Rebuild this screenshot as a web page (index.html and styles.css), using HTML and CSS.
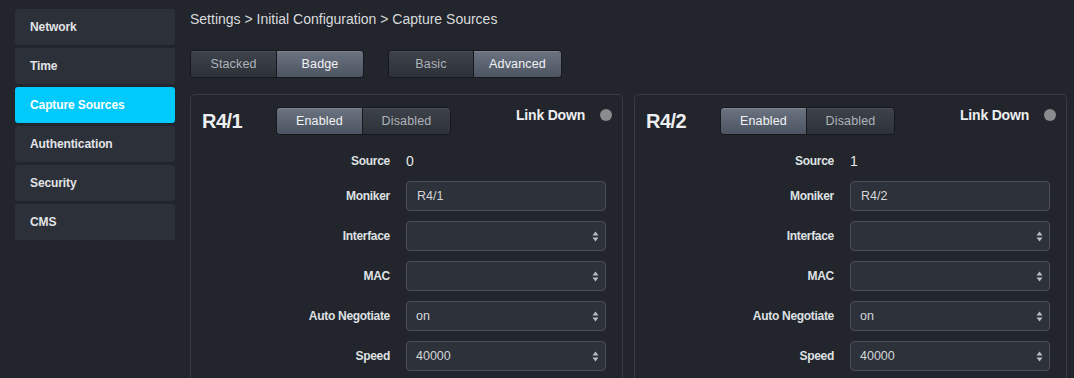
FILE: index.html
```html
<!DOCTYPE html>
<html>
<head>
<meta charset="utf-8">
<link rel="stylesheet" href="styles.css">
</head>
<body>
<div class="app">
  <nav class="sidebar">
    <div class="nav-item">Network</div>
    <div class="nav-item">Time</div>
    <div class="nav-item active">Capture Sources</div>
    <div class="nav-item">Authentication</div>
    <div class="nav-item">Security</div>
    <div class="nav-item">CMS</div>
  </nav>
  <main class="main">
    <div class="crumbs">Settings &gt; Initial Configuration &gt; Capture Sources</div>
    <div class="toolbar">
      <div class="seg">
        <div class="seg-btn w85">Stacked</div>
        <div class="seg-btn w86 on">Badge</div>
      </div>
      <div class="seg">
        <div class="seg-btn w84">Basic</div>
        <div class="seg-btn w87 on">Advanced</div>
      </div>
    </div>
    <div class="panels">
      <section class="panel">
        <header class="panel-head">
          <h2 class="title">R4/1</h2>
          <div class="seg">
            <div class="seg-btn w85 on">Enabled</div>
            <div class="seg-btn w87">Disabled</div>
          </div>
          <div class="status">Link Down<span class="dot"></span></div>
        </header>
        <div class="form">
          <div class="label short">Source</div><div class="value">0</div>
          <div class="label">Moniker</div><div class="input">R4/1</div>
          <div class="label">Interface</div><div class="input select"><span></span><svg class="arr" width="7" height="11" viewBox="0 0 7 11"><path d="M3.5 0.5 L6.5 4.5 L0.5 4.5 Z M3.5 10.5 L6.5 6.5 L0.5 6.5 Z" fill="#b9bcc1"/></svg></div>
          <div class="label">MAC</div><div class="input select"><span></span><svg class="arr" width="7" height="11" viewBox="0 0 7 11"><path d="M3.5 0.5 L6.5 4.5 L0.5 4.5 Z M3.5 10.5 L6.5 6.5 L0.5 6.5 Z" fill="#b9bcc1"/></svg></div>
          <div class="label">Auto Negotiate</div><div class="input select"><span>on</span><svg class="arr" width="7" height="11" viewBox="0 0 7 11"><path d="M3.5 0.5 L6.5 4.5 L0.5 4.5 Z M3.5 10.5 L6.5 6.5 L0.5 6.5 Z" fill="#b9bcc1"/></svg></div>
          <div class="label">Speed</div><div class="input select"><span>40000</span><svg class="arr" width="7" height="11" viewBox="0 0 7 11"><path d="M3.5 0.5 L6.5 4.5 L0.5 4.5 Z M3.5 10.5 L6.5 6.5 L0.5 6.5 Z" fill="#b9bcc1"/></svg></div>
        </div>
      </section>
      <section class="panel">
        <header class="panel-head">
          <h2 class="title">R4/2</h2>
          <div class="seg">
            <div class="seg-btn w85 on">Enabled</div>
            <div class="seg-btn w87">Disabled</div>
          </div>
          <div class="status">Link Down<span class="dot"></span></div>
        </header>
        <div class="form">
          <div class="label short">Source</div><div class="value">1</div>
          <div class="label">Moniker</div><div class="input">R4/2</div>
          <div class="label">Interface</div><div class="input select"><span></span><svg class="arr" width="7" height="11" viewBox="0 0 7 11"><path d="M3.5 0.5 L6.5 4.5 L0.5 4.5 Z M3.5 10.5 L6.5 6.5 L0.5 6.5 Z" fill="#b9bcc1"/></svg></div>
          <div class="label">MAC</div><div class="input select"><span></span><svg class="arr" width="7" height="11" viewBox="0 0 7 11"><path d="M3.5 0.5 L6.5 4.5 L0.5 4.5 Z M3.5 10.5 L6.5 6.5 L0.5 6.5 Z" fill="#b9bcc1"/></svg></div>
          <div class="label">Auto Negotiate</div><div class="input select"><span>on</span><svg class="arr" width="7" height="11" viewBox="0 0 7 11"><path d="M3.5 0.5 L6.5 4.5 L0.5 4.5 Z M3.5 10.5 L6.5 6.5 L0.5 6.5 Z" fill="#b9bcc1"/></svg></div>
          <div class="label">Speed</div><div class="input select"><span>40000</span><svg class="arr" width="7" height="11" viewBox="0 0 7 11"><path d="M3.5 0.5 L6.5 4.5 L0.5 4.5 Z M3.5 10.5 L6.5 6.5 L0.5 6.5 Z" fill="#b9bcc1"/></svg></div>
        </div>
      </section>
    </div>
  </main>
</div>
</body>
</html>
```
FILE: styles.css
```css
html, body {
  margin: 0;
  padding: 0;
  background: #22252b;
  overflow: hidden;
}
body {
  font-family: "Liberation Sans", Arial, sans-serif;
  color: #e4e6e9;
}
.app {
  display: flex;
  align-items: flex-start;
  padding: 9px 0 0 15px;
  gap: 15px;
}
.sidebar {
  width: 160px;
  display: flex;
  flex-direction: column;
  gap: 3px;
  flex: none;
}
.nav-item {
  height: 36px;
  display: flex;
  align-items: center;
  padding-left: 15px;
  background: #2c3038;
  border-radius: 3px;
  font-size: 12px;
  font-weight: bold;
  letter-spacing: -0.1px;
  color: #e2e4e7;
}
.nav-item.active {
  background: #00c9fb;
  color: #ffffff;
}
.main {
  width: 877px;
  flex: none;
}
.crumbs {
  height: 20px;
  line-height: 20px;
  font-size: 14px;
  color: #d9dbde;
}
.toolbar {
  display: flex;
  gap: 24px;
  margin-top: 21px;
}
.seg {
  display: flex;
  height: 28px;
  border: 1px solid #16181c;
  border-radius: 4px;
  box-sizing: border-box;
  overflow: hidden;
  flex: none;
}
.seg-btn {
  display: flex;
  align-items: center;
  justify-content: center;
  font-size: 12.5px;
  letter-spacing: 0.15px;
  color: #aeb3ba;
  background: linear-gradient(#3e434b, #2d3138);
  box-shadow: inset 0 1px 0 rgba(255,255,255,0.06);
}
.seg-btn + .seg-btn {
  border-left: 1px solid #16181c;
}
.seg-btn.on {
  color: #f2f3f5;
  background: linear-gradient(#6b7381, #4d5461);
  box-shadow: inset 0 1px 0 rgba(255,255,255,0.12);
}
.w84 { width: 84px; }
.w85 { width: 85px; }
.w86 { width: 86px; }
.w87 { width: 87px; }
.panels {
  display: flex;
  gap: 11px;
  margin-top: 16px;
}
.panel {
  width: 433px;
  box-sizing: border-box;
  border: 1px solid #393c43;
  border-radius: 5px;
  padding-bottom: 40px;
}
.panel-head {
  display: flex;
  align-items: flex-start;
  padding: 12px 10px 0 11px;
}
.title {
  width: 74px;
  margin: 0;
  height: 28px;
  line-height: 28px;
  font-size: 20px;
  font-weight: bold;
  letter-spacing: -0.5px;
  color: #eceef0;
}
.status {
  margin-left: auto;
  display: flex;
  align-items: center;
  gap: 15px;
  height: 16px;
  margin-top: 0;
  font-size: 14px;
  font-weight: bold;
  letter-spacing: -0.2px;
  color: #eceef0;
}
.dot {
  width: 12px;
  height: 12px;
  border-radius: 50%;
  background: #8a8b8d;
}
.form {
  display: grid;
  grid-template-columns: 199px 200px;
  column-gap: 16px;
  row-gap: 10px;
  margin-top: 16px;
  align-items: center;
}
.label {
  text-align: right;
  font-size: 12px;
  font-weight: bold;
  letter-spacing: -0.3px;
  color: #dfe1e4;
  height: 30px;
  line-height: 30px;
}
.label.short {
  height: 20px;
  line-height: 20px;
}
.value {
  font-size: 14px;
  line-height: 20px;
  height: 20px;
  color: #e6e8ea;
}
.input {
  height: 30px;
  box-sizing: border-box;
  border: 1px solid #4a4e56;
  border-radius: 4px;
  background: #2d3139;
  display: flex;
  align-items: center;
  padding: 0 6px 0 10px;
  font-size: 12.5px;
  color: #d3d6da;
}
.input.select {
  padding-left: 9px;
  justify-content: space-between;
}
.arr {
  flex: none;
}
```
